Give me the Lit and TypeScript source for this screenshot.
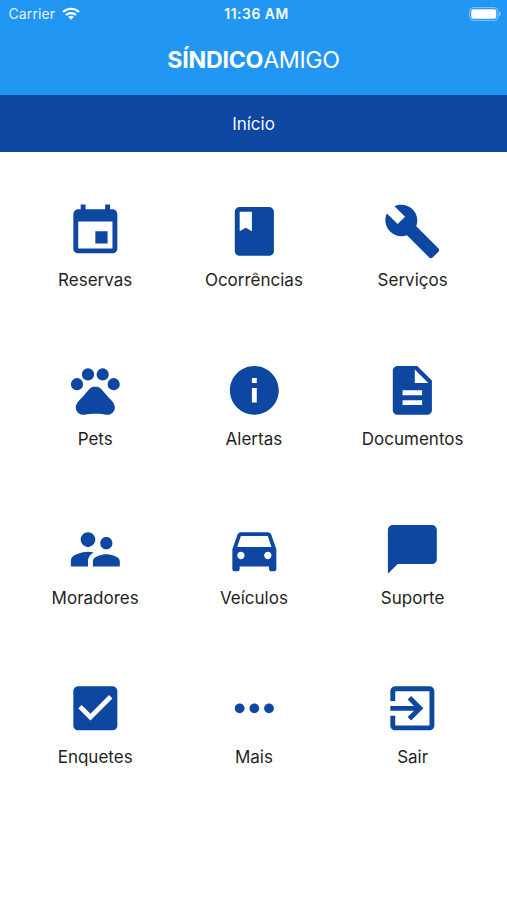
import { LitElement, html, css, svg } from "lit";
import { customElement, property } from "lit/decorators.js";

const ICONS: Record<string, string> = {
  event: "M17 12h-5v5h5v-5zM16 1v2H8V1H6v2H5c-1.11 0-1.99.9-1.99 2L3 19c0 1.1.89 2 2 2h14c1.1 0 2-.9 2-2V5c0-1.1-.9-2-2-2h-1V1h-2zm3 18H5V8h14v11z",
  book: "M18 2H6c-1.1 0-2 .9-2 2v16c0 1.1.9 2 2 2h12c1.1 0 2-.9 2-2V4c0-1.1-.9-2-2-2zM6 4h5v8l-2.5-1.5L6 12V4z",
  wrench: "M22.7 19l-9.1-9.1c.9-2.3.4-5-1.5-6.9-2-2-5-2.4-7.4-1.3L9 6 6 9 1.6 4.7C.4 7.1.9 10.1 2.9 12.1c1.9 1.9 4.6 2.4 6.9 1.5l9.1 9.1c.4.4 1 .4 1.4 0l2.3-2.3c.5-.4.5-1.1.1-1.4z",
  paw: "M2 9.5a2.5 2.5 0 1 0 5 0a2.5 2.5 0 1 0-5 0zM6.5 5.5a2.5 2.5 0 1 0 5 0a2.5 2.5 0 1 0-5 0zM12.5 5.5a2.5 2.5 0 1 0 5 0a2.5 2.5 0 1 0-5 0zM17 9.5a2.5 2.5 0 1 0 5 0a2.5 2.5 0 1 0-5 0zM17.34 14.86c-.87-1.02-1.6-1.89-2.48-2.91-.46-.54-1.05-1.08-1.75-1.32-.11-.04-.22-.07-.33-.09-.25-.04-.52-.04-.78-.04s-.53 0-.79.05c-.11.02-.22.05-.33.09-.7.24-1.28.78-1.75 1.32-.87 1.02-1.6 1.89-2.48 2.91-1.31 1.31-2.92 2.76-2.62 4.79.29 1.02 1.02 2.03 2.33 2.32.73.15 3.06-.44 5.54-.44h.18c2.48 0 4.81.58 5.54.44 1.31-.29 2.04-1.31 2.33-2.32.31-2.04-1.3-3.49-2.61-4.8z",
  info: "M12 2C6.48 2 2 6.48 2 12s4.48 10 10 10 10-4.48 10-10S17.52 2 12 2zm1 15h-2v-6h2v6zm0-8h-2V7h2v2z",
  document: "M14 2H6c-1.1 0-1.99.9-1.99 2L4 20c0 1.1.89 2 1.99 2H18c1.1 0 2-.9 2-2V8l-6-6zm2 16H8v-2h8v2zm0-4H8v-2h8v2zm-3-5V3.5L18.5 9H13z",
  people: "M16.5 12c1.38 0 2.49-1.12 2.49-2.5S17.88 7 16.5 7C15.12 7 14 8.12 14 9.5s1.12 2.5 2.5 2.5zM9 11c1.66 0 2.99-1.34 2.99-3S10.66 5 9 5C7.34 5 6 6.34 6 8s1.34 3 3 3zm7.5 3c-1.83 0-5.5.92-5.5 2.75V19h11v-2.25c0-1.83-3.67-2.75-5.5-2.75zM9 13c-2.33 0-7 1.17-7 3.5V19h7v-2.25c0-.85.33-2.34 2.37-3.47C10.5 13.1 9.66 13 9 13z",
  car: "M18.92 6.01C18.72 5.42 18.16 5 17.5 5h-11c-.66 0-1.21.42-1.42 1.01L3 12v8c0 .55.45 1 1 1h1c.55 0 1-.45 1-1v-1h12v1c0 .55.45 1 1 1h1c.55 0 1-.45 1-1v-8l-2.08-5.99zM6.5 16c-.83 0-1.5-.67-1.5-1.5S5.67 13 6.5 13s1.5.67 1.5 1.5S7.33 16 6.5 16zm11 0c-.83 0-1.5-.67-1.5-1.5s.67-1.5 1.5-1.5 1.5.67 1.5 1.5-.67 1.5-1.5 1.5zM5 11l1.5-4.5h11L19 11H5z",
  chat: "M20 2H4c-1.1 0-2 .9-2 2v18l4-4h14c1.1 0 2-.9 2-2V4c0-1.1-.9-2-2-2z",
  check: "M19 3H5c-1.11 0-2 .9-2 2v14c0 1.1.89 2 2 2h14c1.11 0 2-.9 2-2V5c0-1.1-.89-2-2-2zm-9 14l-5-5 1.41-1.41L10 14.17l7.59-7.59L19 8l-9 9z",
  more: "M6 10c-1.1 0-2 .9-2 2s.9 2 2 2 2-.9 2-2-.9-2-2-2zm12 0c-1.1 0-2 .9-2 2s.9 2 2 2 2-.9 2-2-.9-2-2-2zm-6 0c-1.1 0-2 .9-2 2s.9 2 2 2 2-.9 2-2-.9-2-2-2z",
  exit: "M10.09 15.59L11.5 17l5-5-5-5-1.41 1.41L12.67 11H3v2h9.67l-2.58 2.59zM19 3H5c-1.11 0-2 .9-2 2v4h2V5h14v14H5v-4H3v4c0 1.1.89 2 2 2h14c1.1 0 2-.9 2-2V5c0-1.1-.9-2-2-2z",
};

const ITEMS = [
  { icon: "event", label: "Reservas" },
  { icon: "book", label: "Ocorrências" },
  { icon: "wrench", label: "Serviços" },
  { icon: "paw", label: "Pets" },
  { icon: "info", label: "Alertas" },
  { icon: "document", label: "Documentos" },
  { icon: "people", label: "Moradores" },
  { icon: "car", label: "Veículos" },
  { icon: "chat", label: "Suporte" },
  { icon: "check", label: "Enquetes" },
  { icon: "more", label: "Mais" },
  { icon: "exit", label: "Sair" },
];

@customElement("menu-tile")
export class MenuTile extends LitElement {
  @property() icon = "";
  @property() label = "";

  static styles = css`
    :host {
      display: flex;
      flex-direction: column;
      align-items: center;
      padding-top: 50.2px;
      box-sizing: border-box;
    }
    .icon {
      display: block;
      width: 58.7px;
      height: 58.7px;
      fill: #0d47a1;
    }
    .label {
      margin-top: 7px;
      font-size: 17px;
      line-height: 24px;
      letter-spacing: 0;
      color: #1f1f1f;
      white-space: nowrap;
    }
  `;

  render() {
    return html`
      <svg class="icon" viewBox="0 0 24 24" aria-hidden="true">
        ${svg`<path d=${ICONS[this.icon]}></path>`}
      </svg>
      <span class="label">${this.label}</span>
    `;
  }
}

@customElement("status-bar")
export class StatusBar extends LitElement {
  static styles = css`
    :host {
      display: grid;
      grid-template-columns: 1fr auto 1fr;
      align-items: center;
      height: 27px;
      padding: 0 6px 0 8.5px;
      font-size: 14px;
      color: #fff;
    }
    .left {
      display: flex;
      align-items: center;
      gap: 6.5px;
    }
    .carrier {
      letter-spacing: 0.1px;
      color: #e6f3fe;
    }
    .wifi {
      display: block;
      width: 18px;
      height: 13px;
      fill: none;
      stroke: #fff;
      stroke-width: 2.1;
    }
    .wifi .dot {
      fill: #fff;
      stroke: none;
    }
    .time {
      padding-left: 3.5px;
      font-size: 13.8px;
      font-weight: 600;
      letter-spacing: 0.55px;
    }
    .battery {
      display: block;
      justify-self: end;
      width: 32px;
      height: 14px;
    }
  `;

  render() {
    return html`
      <div class="left">
        <span class="carrier">Carrier</span>
        <svg class="wifi" viewBox="0 0 18 13" aria-hidden="true">
          <path d="M1 5.1a11.3 11.3 0 0 1 16 0"></path>
          <path d="M4 8.1a7.2 7.2 0 0 1 10 0"></path>
          <path class="dot" d="M9 12.8L6.2 10a4 4 0 0 1 5.6 0z"></path>
        </svg>
      </div>
      <span class="time">11:36 AM</span>
      <svg class="battery" viewBox="0 0 32 14" aria-hidden="true">
        <rect x=".6" y=".6" width="28.3" height="12.8" rx="3.6" fill="none" stroke="#fff" stroke-opacity=".45"></rect>
        <rect x="2.2" y="2.2" width="25" height="9.6" rx="2" fill="#fff"></rect>
        <path d="M30.2 4.8a2.4 2.4 0 0 1 0 4.4z" fill="#fff" fill-opacity=".55"></path>
      </svg>
    `;
  }
}

@customElement("app-root")
export class AppRoot extends LitElement {
  static styles = css`
    :host {
      display: flex;
      flex-direction: column;
      height: 900px;
      background: #fff;
      font-family: Inter, "Liberation Sans", sans-serif;
      overflow: hidden;
    }
    .header {
      height: 95px;
      background: #2196f3;
      color: #fff;
    }
    .brand {
      margin: 0;
      padding-top: 18px;
      text-align: center;
      font-size: 23.2px;
      line-height: 30px;
      font-weight: 400;
      letter-spacing: -0.35px;
    }
    .strong {
      font-weight: 700;
      letter-spacing: -0.25px;
    }
    .section {
      display: flex;
      align-items: center;
      justify-content: center;
      height: 57.3px;
      background: #0d47a1;
      color: #f2f6fb;
      font-size: 17px;
    }
    .menu {
      display: grid;
      grid-template-columns: repeat(3, 1fr);
      grid-auto-rows: 158.85px;
      padding: 0 15px 0 15.8px;
    }
  `;

  render() {
    return html`
      <header class="header">
        <status-bar></status-bar>
        <h1 class="brand"><span class="strong">SÍNDICO</span>AMIGO</h1>
      </header>
      <div class="section">Início</div>
      <main class="menu">
        ${ITEMS.map((i) => html`<menu-tile .icon=${i.icon} .label=${i.label}></menu-tile>`)}
      </main>
    `;
  }
}
